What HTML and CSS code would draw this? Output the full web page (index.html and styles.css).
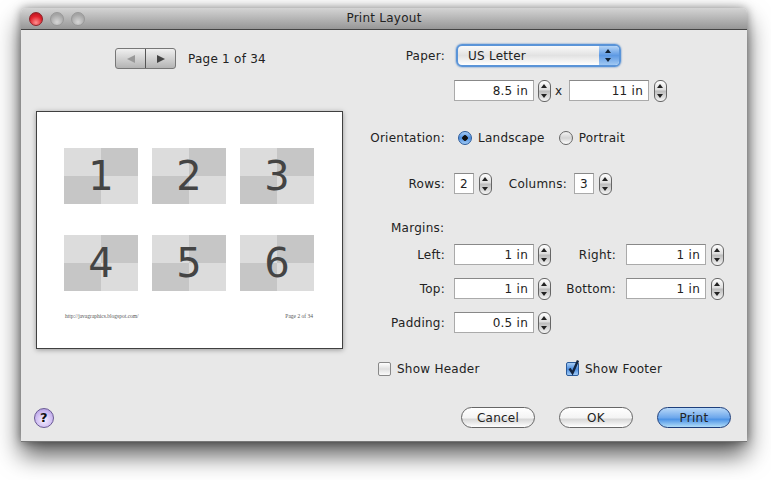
FILE: index.html
```html
<!DOCTYPE html>
<html lang="en">
<head>
    <meta charset="UTF-8">
    <title>Print Layout</title>
    <link rel="stylesheet" href="styles.css">
</head>
<body>
<div class="window">
    <div class="titlebar">
        <span class="light light-close"></span>
        <span class="light"></span>
        <span class="light"></span>
        <div class="title">Print Layout</div>
    </div>

    <div class="main">
        <div class="left">
            <div class="pager">
                <div class="segments">
                    <span class="segment"><i class="tri-left"></i></span>
                    <span class="segment"><i class="tri-right"></i></span>
                </div>
                <span class="page-label">Page 1 of 34</span>
            </div>
            <div class="paper">
                <div class="thumbs">
                    <div class="thumb"><span class="q q-light"></span><span class="q q-dark"></span><span class="q q-dark"></span><span class="q q-light"></span><b class="num">1</b></div>
                    <div class="thumb"><span class="q q-light"></span><span class="q q-dark"></span><span class="q q-dark"></span><span class="q q-light"></span><b class="num">2</b></div>
                    <div class="thumb"><span class="q q-light"></span><span class="q q-dark"></span><span class="q q-dark"></span><span class="q q-light"></span><b class="num">3</b></div>
                    <div class="thumb"><span class="q q-light"></span><span class="q q-dark"></span><span class="q q-dark"></span><span class="q q-light"></span><b class="num">4</b></div>
                    <div class="thumb"><span class="q q-light"></span><span class="q q-dark"></span><span class="q q-dark"></span><span class="q q-light"></span><b class="num">5</b></div>
                    <div class="thumb"><span class="q q-light"></span><span class="q q-dark"></span><span class="q q-dark"></span><span class="q q-light"></span><b class="num">6</b></div>
                </div>
                <div class="paper-foot">
                    <span>http://javagraphics.blogspot.com/</span>
                    <span>Page 2 of 34</span>
                </div>
            </div>
        </div>

        <div class="right">
            <div class="row row-paper">
                <label class="lbl">Paper:</label>
                <div class="popup">
                    <span class="popup-text">US Letter</span>
                    <span class="popup-arrows"></span>
                </div>
            </div>
            <div class="row row-size">
                <span class="lbl"></span>
                <div class="field">8.5 in</div><div class="stepper"></div>
                <span class="times">x</span>
                <div class="field">11 in</div><div class="stepper stepper-far"></div>
            </div>
            <div class="row row-orient">
                <label class="lbl">Orientation:</label>
                <span class="radio radio-on"></span><span class="radio-text">Landscape</span>
                <span class="radio radio-second"></span><span class="radio-text">Portrait</span>
            </div>
            <div class="row row-grid">
                <label class="lbl">Rows:</label>
                <div class="field field-small">2</div><div class="stepper stepper-far"></div>
                <label class="lbl lbl-columns">Columns:</label>
                <div class="field field-small">3</div><div class="stepper stepper-far"></div>
            </div>
            <div class="row row-margins">
                <label class="lbl lbl-margins">Margins:</label>
            </div>
            <div class="row row-left">
                <label class="lbl">Left:</label>
                <div class="field">1 in</div><div class="stepper"></div>
                <label class="lbl lbl-side">Right:</label>
                <div class="field">1 in</div><div class="stepper stepper-far"></div>
            </div>
            <div class="row row-next">
                <label class="lbl">Top:</label>
                <div class="field">1 in</div><div class="stepper"></div>
                <label class="lbl lbl-side">Bottom:</label>
                <div class="field">1 in</div><div class="stepper stepper-far"></div>
            </div>
            <div class="row row-next">
                <label class="lbl">Padding:</label>
                <div class="field">0.5 in</div><div class="stepper"></div>
            </div>
            <div class="row row-checks">
                <div class="check-item">
                    <span class="check"></span><span class="check-text">Show Header</span>
                </div>
                <div class="check-item">
                    <span class="check check-on">
                        <svg class="tick" width="16" height="18" viewBox="0 0 16 18"><path d="M3.5 9.5 L6.5 14 L12 1.5" fill="none" stroke="#14243f" stroke-width="2.4"/></svg>
                    </span><span class="check-text">Show Footer</span>
                </div>
            </div>
        </div>
    </div>

    <div class="footer">
        <div class="help">?</div>
        <div class="buttons">
            <div class="btn">Cancel</div>
            <div class="btn">OK</div>
            <div class="btn btn-default">Print</div>
        </div>
    </div>
</div>
</body>
</html>
```

FILE: styles.css
```css
* {
    box-sizing: border-box;
}
html {
    height: 100%;
    background: #fff;
}
body {
    margin: 0;
    height: 480px;
    padding: 8px 0 0 21px;
    font-family: "DejaVu Sans", sans-serif;
    font-size: 12px;
    letter-spacing: 0.25px;
    color: #222;
}
.window {
    width: 726px;
    height: 434px;
    display: flex;
    flex-direction: column;
    background: #e8e8e8;
    border-radius: 5px 5px 0 0;
    box-shadow: 0 13px 24px rgba(0, 0, 0, 0.65), 0 0 10px rgba(0, 0, 0, 0.4);
    border-bottom: 1px solid #777;
}

/* title bar */
.titlebar {
    height: 22px;
    flex: none;
    display: flex;
    align-items: center;
    gap: 7px;
    padding-left: 8px;
    background: linear-gradient(#d4d4d4, #979797);
    border-bottom: 1px solid #444;
    border-radius: 5px 5px 0 0;
    position: relative;
}
.light {
    width: 14px;
    height: 14px;
    border-radius: 50%;
    border: 1px solid #989898;
    background: radial-gradient(circle at 50% 75%, #d6d6d6, #a4a4a4 70%);
}
.light-close {
    border-color: #8c2228;
    background: radial-gradient(circle at 50% 80%, #ff8f8f, #e0222c 55%, #a8101a);
}
.title {
    position: absolute;
    left: 0;
    right: 0;
    top: 3px;
    text-align: center;
    color: #222;
    font-size: 12px;
}

/* layout */
.main {
    display: flex;
    gap: 17px;
    padding: 14px 0 0 15px;
}
.left {
    width: 307px;
    flex: none;
}
.right {
    flex: 1;
}

/* left side */
.pager {
    display: flex;
    align-items: center;
    gap: 12px;
    height: 23px;
    margin-left: 79px;
    margin-top: 3px;
}
.page-label {
    padding-top: 1px;
}
.segments {
    display: flex;
    width: 61px;
    height: 21px;
    border: 1px solid #777;
    border-radius: 3px;
    background: linear-gradient(#f0f0f0, #b4b4b4);
}
.segment {
    flex: 1;
    display: flex;
    align-items: center;
    justify-content: center;
}
.segment + .segment {
    border-left: 1px solid #555;
}
.tri-left {
    border: 4px solid transparent;
    border-left: 0;
    border-right: 8px solid #999;
}
.tri-right {
    border: 4px solid transparent;
    border-right: 0;
    border-left: 8px solid #444;
}
.paper {
    width: 307px;
    height: 238px;
    margin-top: 41px;
    padding: 36px 0 0 27px;
    background: #fff;
    border: 1px solid #404040;
    box-shadow: 0 1px 5px rgba(0, 0, 0, 0.35);
    letter-spacing: 0;
}
.thumbs {
    display: grid;
    grid-template-columns: repeat(3, 74px);
    grid-auto-rows: 56px;
    column-gap: 14px;
    row-gap: 31px;
}
.thumb {
    display: grid;
    grid-template-columns: 1fr 1fr;
    grid-template-rows: 1fr 1fr;
    position: relative;
}
.q-light {
    background: #dcdcdc;
}
.q-dark {
    background: #c6c6c6;
}
.num {
    position: absolute;
    left: 0;
    right: 0;
    top: 4px;
    text-align: center;
    font-weight: normal;
    font-size: 40px;
    line-height: 48px;
    color: #444;
}
.paper-foot {
    display: flex;
    justify-content: space-between;
    width: 250px;
    margin-top: 22px;
    padding: 0 1px;
    font-family: "Liberation Serif", serif;
    font-size: 5.5px;
    color: #555;
}

/* right side */
.row {
    display: flex;
    align-items: center;
    height: 21px;
}
.lbl {
    width: 85px;
    flex: none;
    margin-right: 9px;
    text-align: right;
}
.row-paper {
    height: 23px;
}
.row-size {
    margin-top: 13px;
}
.row-orient {
    margin-top: 26px;
}
.row-grid {
    margin-top: 25px;
}
.row-margins {
    margin-top: 23px;
}
.lbl-margins {
    margin-left: 31px;
    text-align: left;
}
.row-left {
    margin-top: 6px;
}
.row-next {
    margin-top: 13px;
}
.row-checks {
    margin-top: 25px;
    padding-left: 18px;
}
.lbl-columns {
    width: 75px;
    margin-right: 7px;
}
.lbl-side {
    width: 65px;
    margin-right: 10px;
}
.field {
    width: 80px;
    height: 21px;
    flex: none;
    padding-right: 5px;
    line-height: 20px;
    text-align: right;
    background: #fff;
    border: 1px solid #aaa;
    border-top-color: #888;
}
.field-small {
    width: 20px;
    padding-right: 0;
    text-align: center;
}
.stepper {
    width: 13px;
    height: 22px;
    flex: none;
    margin-left: 4px;
    border: 1px solid #666;
    border-radius: 6px;
    background: linear-gradient(#fff, #ddd 45%, #bbb 50%, #f4f4f4);
    position: relative;
}
.stepper-far {
    margin-left: 5px;
}
.stepper::before,
.stepper::after {
    content: "";
    position: absolute;
    left: 2px;
    border: 3.5px solid transparent;
    border-top: 0;
    border-bottom: 4px solid #222;
}
.stepper::before {
    top: 3px;
}
.stepper::after {
    bottom: 3px;
    transform: rotate(180deg);
}
.times {
    width: 18px;
    flex: none;
    padding-left: 4px;
}

/* popup */
.popup {
    width: 165px;
    height: 23px;
    margin-left: 2px;
    display: flex;
    align-items: center;
    justify-content: space-between;
    border: 2px solid #5a94d8;
    border-radius: 6px;
    background: linear-gradient(#fafafa, #e2e2e2 50%, #fff);
    box-shadow: 0 0 2px #3a78c0;
    overflow: hidden;
}
.popup-text {
    padding-left: 10px;
}
.popup-arrows {
    width: 20px;
    height: 100%;
    background: linear-gradient(#b4d4f6, #5e9ae4 50%, #a0c8f2);
    position: relative;
}
.popup-arrows::before,
.popup-arrows::after {
    content: "";
    position: absolute;
    left: 6px;
    border: 3.5px solid transparent;
    border-top: 0;
    border-bottom: 4px solid #123;
}
.popup-arrows::before {
    top: 3px;
}
.popup-arrows::after {
    bottom: 3px;
    transform: rotate(180deg);
}

/* radios and checks */
.radio {
    width: 14px;
    height: 14px;
    flex: none;
    margin-left: 4px;
    border: 1px solid #666;
    border-radius: 50%;
    background: linear-gradient(#f4f4f4, #d4d4d4 50%, #fff);
}
.radio-on {
    border-color: #2a5a9a;
    background: radial-gradient(circle, #111 0 2.5px, transparent 3px), linear-gradient(#a8cdf5, #4e8fe0 50%, #a0caf5);
}
.radio-second {
    margin-left: 14px;
}
.radio-text {
    margin-left: 6px;
}
.check-item {
    display: flex;
    align-items: center;
    width: 188px;
}
.check {
    width: 13px;
    height: 14px;
    flex: none;
    border: 1px solid #888;
    border-radius: 2px;
    background: linear-gradient(#fff, #e0e0e0 50%, #fafafa);
    position: relative;
}
.check-on {
    border-color: #2a5a9a;
    background: linear-gradient(#a8cdf5, #4e8fe0 50%, #a0caf5);
}
.tick {
    position: absolute;
    left: -1px;
    top: -4px;
}
.check-text {
    margin-left: 6px;
}

/* footer */
.footer {
    margin-top: auto;
    display: flex;
    align-items: center;
    justify-content: space-between;
    padding: 0 16px 13px 13px;
}
.help {
    width: 20px;
    height: 20px;
    border: 1px solid #6a5a94;
    border-radius: 50%;
    text-align: center;
    font-weight: bold;
    font-size: 13px;
    line-height: 18px;
    color: #111;
    background: radial-gradient(circle at 50% 62%, #f6f0ff, #cbb8f0 60%, #9c86d2);
}
.buttons {
    display: flex;
    gap: 24px;
}
.btn {
    width: 74px;
    height: 21px;
    border: 1px solid #666;
    border-radius: 11px;
    text-align: center;
    line-height: 20px;
    background: linear-gradient(#fff, #f4f4f4 50%, #d8d8d8 60%, #fff);
}
.btn-default {
    border-color: #1e3f7c;
    background: linear-gradient(#b8d8f8, #6ea8ec 50%, #4e94e6 60%, #b0dcf8);
}
```
